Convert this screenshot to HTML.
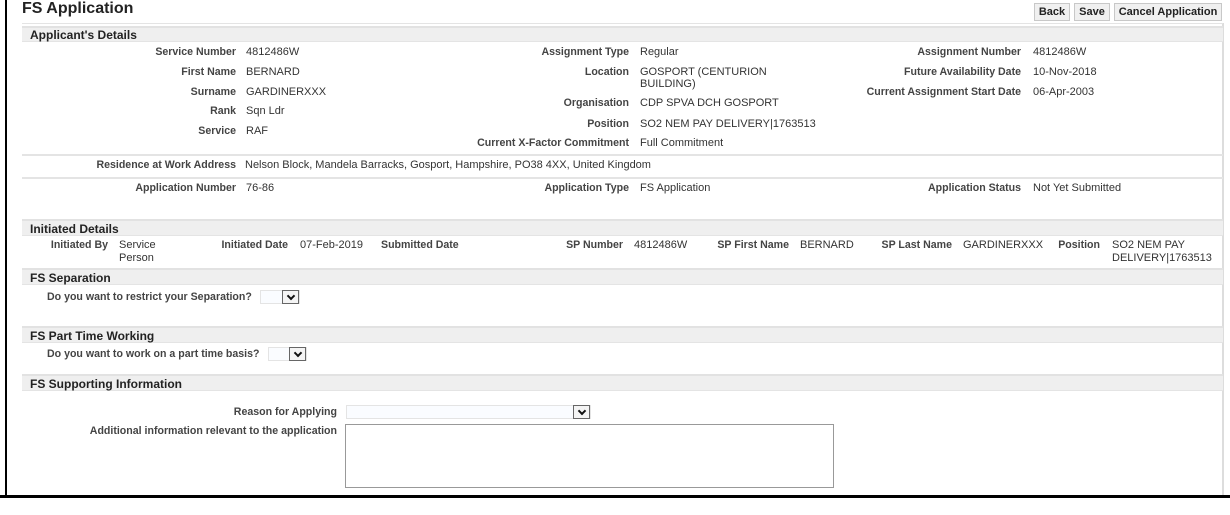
<!DOCTYPE html>
<html><head><meta charset="utf-8"><style>
*{margin:0;padding:0;box-sizing:border-box}
body{width:1230px;height:515px;background:#fff;position:relative;overflow:hidden;font-family:"Liberation Sans",Arial,sans-serif;font-size:11px;color:#333}
div,span{position:absolute;white-space:nowrap;line-height:12px}
.l{font-weight:bold;color:#444;text-align:right;font-size:10.6px}
.v{color:#333}
.band{left:22px;width:1201px;background:#efefef;border-top:2px solid #e2e2e2;border-bottom:1px solid #e4e4e4}
.band span{left:8px;font-weight:bold;font-size:12px;color:#222;line-height:13px}
.hl{left:22px;width:1201px;height:2px;background:#e4e4e4}
.btn{top:3px;height:18px;background:#f0f0f0;border:1px solid #c8c8c8;font-weight:bold;font-size:11px;color:#222;text-align:center;line-height:16px}
.sel{height:14px;border:1px solid #e4e4e4;background:#fafcff}
.sel i{position:absolute;right:0;top:-1px;width:17px;height:14px;border:1px solid #666;background:#f4f4f4}
.sel i:after{content:"";position:absolute;left:5px;top:2px;width:4px;height:4px;border-right:2px solid #111;border-bottom:2px solid #111;transform:rotate(45deg)}
</style></head><body>
<div style="left:5px;top:0;width:2px;height:497px;background:#000"></div>
<div style="left:0;top:495px;width:1230px;height:3px;background:#000"></div>
<div style="left:1222px;top:23px;width:2px;height:472px;background:#ddd"></div>
<div style="left:22px;top:0;font-size:16px;font-weight:bold;color:#222;line-height:18px">FS Application</div>
<div class="hl" style="top:23px;height:1px"></div>
<div class="btn" style="left:1034px;width:36px">Back</div>
<div class="btn" style="left:1074px;width:36px">Save</div>
<div class="btn" style="left:1114px;width:108px">Cancel Application</div>

<div class="band" style="top:26px;height:16px"><span style="top:1px">Applicant's Details</span></div>
<div class="l" style="right:994px;top:46px">Service Number</div><div class="v" style="left:246px;top:46px">4812486W</div>
<div class="l" style="right:994px;top:66px">First Name</div><div class="v" style="left:246px;top:66px">BERNARD</div>
<div class="l" style="right:994px;top:86px">Surname</div><div class="v" style="left:246px;top:86px">GARDINERXXX</div>
<div class="l" style="right:994px;top:105px">Rank</div><div class="v" style="left:246px;top:105px">Sqn Ldr</div>
<div class="l" style="right:994px;top:125px">Service</div><div class="v" style="left:246px;top:125px">RAF</div>

<div class="l" style="right:601px;top:46px">Assignment Type</div><div class="v" style="left:640px;top:46px">Regular</div>
<div class="l" style="right:601px;top:66px">Location</div><div class="v" style="left:640px;top:66px">GOSPORT (CENTURION<br>BUILDING)</div>
<div class="l" style="right:601px;top:97px">Organisation</div><div class="v" style="left:640px;top:97px">CDP SPVA DCH GOSPORT</div>
<div class="l" style="right:601px;top:118px">Position</div><div class="v" style="left:640px;top:118px">SO2 NEM PAY DELIVERY|1763513</div>
<div class="l" style="right:601px;top:137px">Current X-Factor Commitment</div><div class="v" style="left:640px;top:137px">Full Commitment</div>

<div class="l" style="right:209px;top:46px">Assignment Number</div><div class="v" style="left:1033px;top:46px">4812486W</div>
<div class="l" style="right:209px;top:66px">Future Availability Date</div><div class="v" style="left:1033px;top:66px">10-Nov-2018</div>
<div class="l" style="right:209px;top:86px">Current Assignment Start Date</div><div class="v" style="left:1033px;top:86px">06-Apr-2003</div>

<div class="hl" style="top:154px"></div>
<div class="l" style="right:994px;top:159px">Residence at Work Address</div><div class="v" style="left:245px;top:159px">Nelson Block, Mandela Barracks, Gosport, Hampshire, PO38 4XX, United Kingdom</div>
<div class="hl" style="top:177px"></div>
<div class="l" style="right:994px;top:182px">Application Number</div><div class="v" style="left:246px;top:182px">76-86</div>
<div class="l" style="right:601px;top:182px">Application Type</div><div class="v" style="left:640px;top:182px">FS Application</div>
<div class="l" style="right:209px;top:182px">Application Status</div><div class="v" style="left:1033px;top:182px">Not Yet Submitted</div>

<div class="band" style="top:219px;height:17px"><span style="top:2px">Initiated Details</span></div>
<div class="l" style="right:1122px;top:239px">Initiated By</div><div class="v" style="left:119px;top:239px;line-height:13px">Service<br>Person</div>
<div class="l" style="right:942px;top:239px">Initiated Date</div><div class="v" style="left:300px;top:239px">07-Feb-2019</div>
<div class="l" style="left:381px;top:239px">Submitted Date</div>
<div class="l" style="right:607px;top:239px">SP Number</div><div class="v" style="left:634px;top:239px">4812486W</div>
<div class="l" style="right:441px;top:239px">SP First Name</div><div class="v" style="left:800px;top:239px">BERNARD</div>
<div class="l" style="right:278px;top:239px">SP Last Name</div><div class="v" style="left:963px;top:239px">GARDINERXXX</div>
<div class="l" style="right:130px;top:239px">Position</div><div class="v" style="left:1112px;top:239px;line-height:13px">SO2 NEM PAY<br>DELIVERY|1763513</div>

<div class="band" style="top:268px;height:17px"><span style="top:2px">FS Separation</span></div>
<div class="l" style="left:47px;top:291px">Do you want to restrict your Separation?</div>
<div class="sel" style="left:260px;top:290px;width:40px"><i></i></div>

<div class="band" style="top:326px;height:17px"><span style="top:2px">FS Part Time Working</span></div>
<div class="l" style="left:47px;top:348px">Do you want to work on a part time basis?</div>
<div class="sel" style="left:268px;top:347px;width:39px"><i></i></div>

<div class="band" style="top:374px;height:17px"><span style="top:2px">FS Supporting Information</span></div>
<div class="l" style="right:893px;top:406px">Reason for Applying</div>
<div class="sel" style="left:346px;top:405px;width:245px"><i></i></div>
<div class="l" style="right:893px;top:425px">Additional information relevant to the application</div>
<div style="left:345px;top:424px;width:489px;height:64px;border:1px solid #999;background:#fff"></div>
</body></html>
